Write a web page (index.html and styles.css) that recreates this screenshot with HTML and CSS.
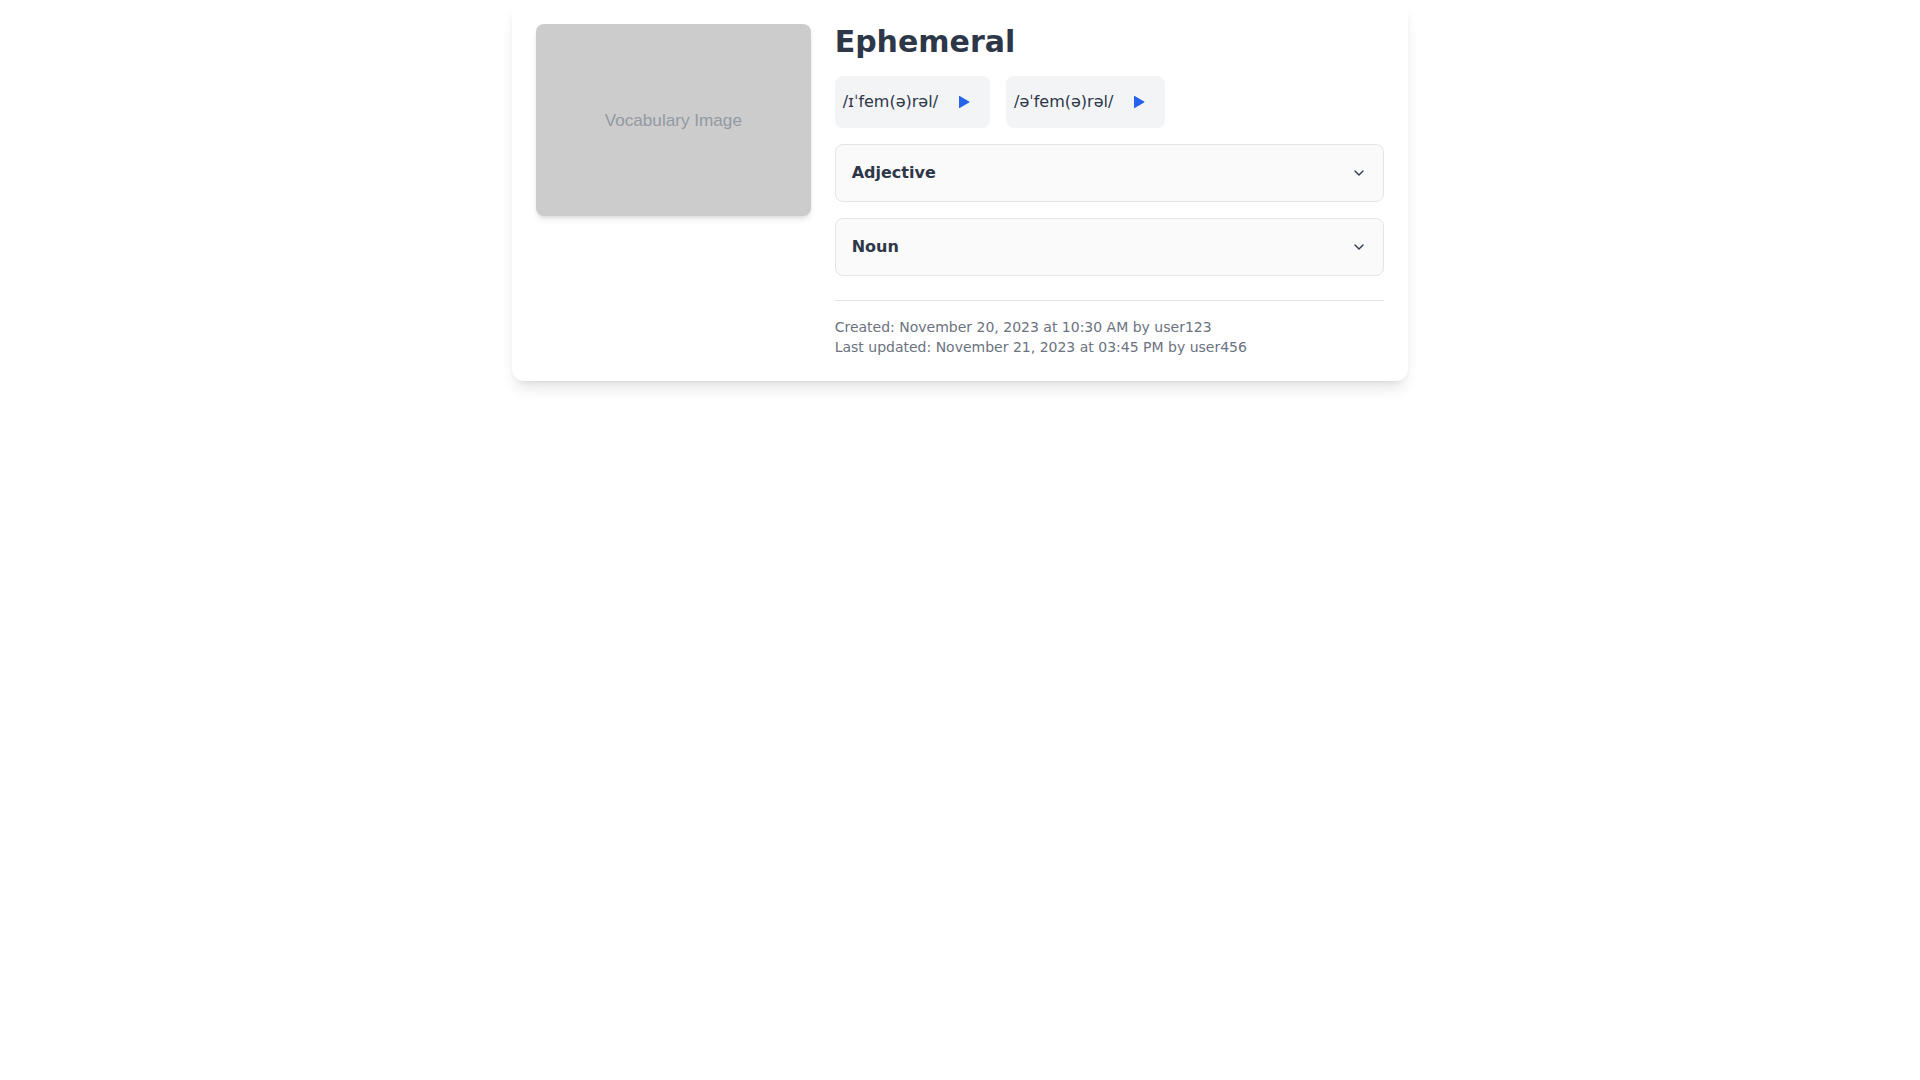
FILE: index.html
```html
<!DOCTYPE html>
<html lang="en">
<head>
<meta charset="UTF-8" />
<meta name="viewport" content="width=device-width, initial-scale=1" />
<title>Vocabulary</title>
<link rel="stylesheet" href="styles.css">
</head>
<body>

<div class="card">
  <div class="picture">Vocabulary Image</div>

  <div class="details">
    <h1>Ephemeral</h1>

    <div class="phonetics">
      <div class="phonetic">
        <span>/ɪˈfem(ə)rəl/</span>
        <button class="play" aria-label="Play">
          <svg viewBox="0 0 24 24" fill="currentColor"><path d="M6 5.2v13.6c0 .4.4.6.8.4l11.4-6.7c.4-.2.4-.8 0-1L6.8 4.8c-.4-.2-.8 0-.8.4z"/></svg>
        </button>
      </div>
      <div class="phonetic">
        <span>/əˈfem(ə)rəl/</span>
        <button class="play" aria-label="Play">
          <svg viewBox="0 0 24 24" fill="currentColor"><path d="M6 5.2v13.6c0 .4.4.6.8.4l11.4-6.7c.4-.2.4-.8 0-1L6.8 4.8c-.4-.2-.8 0-.8.4z"/></svg>
        </button>
      </div>
    </div>

    <div class="meanings">
      <details class="meaning">
        <summary>
          <span>Adjective</span>
          <svg class="chevron" viewBox="0 0 24 24"><path d="M6 9l6 6 6-6"/></svg>
        </summary>
      </details>
      <details class="meaning">
        <summary>
          <span>Noun</span>
          <svg class="chevron" viewBox="0 0 24 24"><path d="M6 9l6 6 6-6"/></svg>
        </summary>
      </details>
    </div>

    <div class="meta">
      <p>Created: November 20, 2023 at 10:30 AM by user123</p>
      <p>Last updated: November 21, 2023 at 03:45 PM by user456</p>
    </div>
  </div>
</div>

</body>
</html>
```

FILE: styles.css
```css
* {
  box-sizing: border-box;
}
body {
  margin: 0;
  min-height: 100vh;
  background: #fff;
  color: #2d3748;
  font-family: "DejaVu Sans", sans-serif;
  font-size: 16px;
  line-height: 24px;
}
.card {
  display: grid;
  grid-template-columns: 1fr 2fr;
  align-items: start;
  gap: 24px;
  max-width: 896px;
  margin: 0 auto;
  padding: 24px;
  background: #fff;
  border-radius: 12px;
  box-shadow: 0 10px 15px -3px rgba(0, 0, 0, 0.1), 0 4px 6px -4px rgba(0, 0, 0, 0.1);
}
.picture {
  display: flex;
  align-items: center;
  justify-content: center;
  height: 192px;
  background: #ccc;
  color: #9399a2;
  font-family: "Liberation Sans", Arial, sans-serif;
  font-size: 17.15px;
  border-radius: 8px;
  box-shadow: 0 4px 6px -1px rgba(0, 0, 0, 0.1), 0 2px 4px -2px rgba(0, 0, 0, 0.1);
}
.details {
  display: flex;
  flex-direction: column;
  min-width: 0;
}
h1 {
  margin: 0 0 16px;
  font-size: 30px;
  line-height: 36px;
}
.phonetics {
  display: flex;
  gap: 16px;
  margin-bottom: 16px;
}
.phonetic {
  display: flex;
  align-items: center;
  gap: 8px;
  padding: 8px;
  background: #f3f4f6;
  border-radius: 8px;
}
.play {
  display: flex;
  padding: 8px;
  border: none;
  background: none;
  color: #2563eb;
  cursor: pointer;
}
.play svg {
  width: 20px;
  height: 20px;
}
.meanings {
  display: flex;
  flex-direction: column;
  gap: 16px;
}
.meaning {
  background: #fafafa;
  border: 1px solid #e5e5e5;
  border-radius: 8px;
}
.meaning summary {
  display: flex;
  align-items: center;
  justify-content: space-between;
  padding: 16px;
  font-weight: bold;
  cursor: pointer;
}
.chevron {
  width: 16px;
  height: 16px;
  fill: none;
  stroke: currentColor;
  stroke-width: 2;
  stroke-linecap: round;
  stroke-linejoin: round;
}
.meta {
  margin-top: 24px;
  padding-top: 16px;
  border-top: 1px solid #e5e5e5;
  color: #6b7280;
  font-size: 14px;
  line-height: 20px;
}
.meta p {
  margin: 0;
}
```
